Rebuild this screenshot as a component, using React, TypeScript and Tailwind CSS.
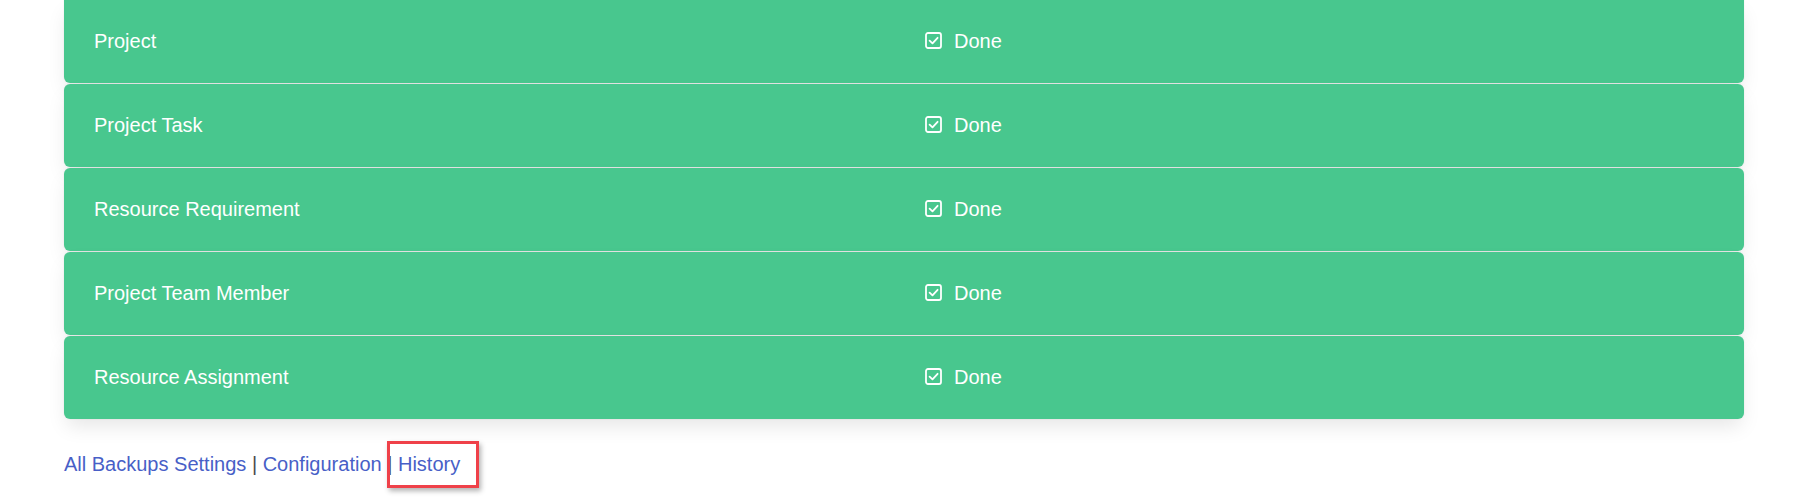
const rows = [
  "Project",
  "Project Task",
  "Resource Requirement",
  "Project Team Member",
  "Resource Assignment",
];

function CheckSquare() {
  return (
    <svg width="17" height="17" viewBox="0 0 17 17" fill="none" className="shrink-0">
      <rect x="1" y="1" width="15" height="15" rx="2" stroke="white" strokeWidth="1.8" />
      <path d="M4.6 8.6 7.5 11.4 12.6 5.8" stroke="white" strokeWidth="1.8" strokeLinecap="round" strokeLinejoin="round" />
    </svg>
  );
}

export default function App() {
  return (
    <div className="w-[1814px] h-[501px] bg-white overflow-hidden font-['Liberation_Sans',Arial,sans-serif]">
      <div className="ml-[64px] w-[1680px]">
        <div className="flex flex-col gap-px">
          {rows.map((name, i) => (
            <div
              key={name}
              className={
                "flex items-center h-[83px] pb-[2px] bg-[#48c78e] text-white text-[20px] shadow-[0_10px_20px_-3px_rgba(10,10,10,0.1),0_0_0_1px_rgba(10,10,10,0.02)] " +
                (i === 0 ? "rounded-b-[6px]" : "rounded-[6px]")
              }
            >
              <div className="w-[861px] pl-[30px]">{name}</div>
              <div className="flex items-center gap-[12px]">
                <CheckSquare />
                <span>Done</span>
              </div>
            </div>
          ))}
        </div>
        <div className="relative mt-[30px] text-[20px] leading-[1.5] text-[#4a4a4a]">
          <a className="text-[#485fc7]">All Backups Settings</a> |{" "}
          <a className="text-[#485fc7]">Configuration</a> |{" "}
          <a className="text-[#485fc7]">History</a>
          <div className="absolute left-[323px] top-[-8px] w-[92px] h-[47px] border-[3px] border-[#ef4149] shadow-[2px_3px_5px_rgba(0,0,0,0.3)]" />
        </div>
      </div>
    </div>
  );
}
